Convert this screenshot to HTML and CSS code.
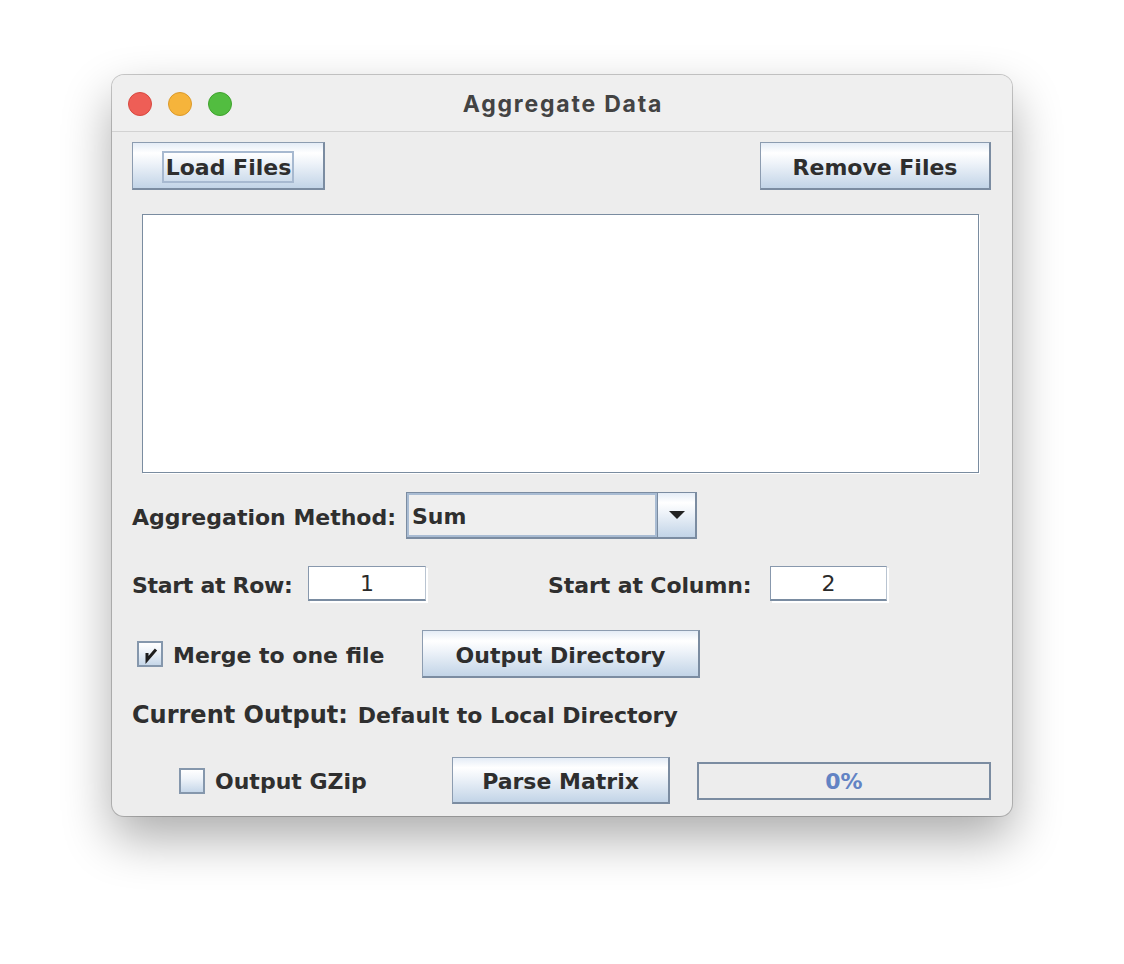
FILE: index.html
```html
<!DOCTYPE html>
<html>
<head>
<meta charset="utf-8">
<link rel="stylesheet" href="styles.css">
</head>
<body>
<div class="stage">
  <div class="window">
    <div class="titlebar">
      <div class="lights">
        <span class="light red"></span>
        <span class="light yellow"></span>
        <span class="light green"></span>
      </div>
      <div class="title">Aggregate Data</div>
      <div></div>
    </div>
    <div class="content">
      <div class="row top-row">
        <div class="btn btn-load"><span class="focus">Load Files</span></div>
        <div class="btn btn-remove"><span class="btn-text">Remove Files</span></div>
      </div>
      <div class="list"></div>
      <div class="row combo-row">
        <div class="lbl lbl-method">Aggregation Method:</div>
        <div class="combo">
          <div class="combo-field">Sum</div>
          <div class="combo-arrow">
            <svg width="18" height="10" viewBox="0 0 18 10"><polygon points="1,1 17,1 9,9" fill="#222"/></svg>
          </div>
        </div>
      </div>
      <div class="row start-row">
        <div class="lbl lbl-row">Start at Row:</div>
        <div class="field field-row">1</div>
        <div class="lbl lbl-col">Start at Column:</div>
        <div class="field field-col">2</div>
      </div>
      <div class="row merge-row">
        <div class="check-group merge-group">
          <span class="checkbox">
            <svg width="22" height="22" viewBox="0 0 22 22"><path d="M8 10 L8 17 L17 6.5" fill="none" stroke="#1e1e1e" stroke-width="3" stroke-linejoin="miter" stroke-linecap="butt"/></svg>
          </span>
          <span class="check-label">Merge to one file</span>
        </div>
        <div class="btn btn-outdir"><span class="btn-text">Output Directory</span></div>
      </div>
      <div class="row output-row">
        <span class="out-title">Current Output:</span>
        <span class="out-value">Default to Local Directory</span>
      </div>
      <div class="row bottom-row">
        <div class="check-group gzip-group">
          <span class="checkbox"></span>
          <span class="check-label">Output GZip</span>
        </div>
        <div class="btn btn-parse"><span class="btn-text">Parse Matrix</span></div>
        <div class="progress">0%</div>
      </div>
    </div>
  </div>
</div>
</body>
</html>
```
FILE: styles.css
```css
html, body {
  margin: 0;
  padding: 0;
  background: #ffffff;
}
.stage {
  width: 1124px;
  height: 964px;
  box-sizing: border-box;
  padding: 75px 0 0 112px;
}
.window {
  width: 900px;
  height: 741px;
  border-radius: 12px;
  background: #ededed;
  box-shadow: 0 0 0 1px rgba(0,0,0,0.2), 0 22px 50px rgba(0,0,0,0.33);
  overflow: hidden;
  font-family: "DejaVu Sans", sans-serif;
  font-weight: bold;
  color: #2f2f2f;
}
.titlebar {
  height: 57px;
  box-sizing: border-box;
  border-bottom: 1px solid #d2d2d2;
  background: #efefef;
  display: grid;
  grid-template-columns: 1fr auto 1fr;
  align-items: center;
}
.lights {
  display: flex;
  gap: 16px;
  padding-left: 16px;
  padding-top: 1px;
}
.light {
  width: 24px;
  height: 24px;
  border-radius: 50%;
  box-sizing: border-box;
}
.red { background: #ee5e56; border: 1px solid #d8483f; }
.yellow { background: #f6b43b; border: 1px solid #dc9a2a; }
.green { background: #52bd40; border: 1px solid #3fa32d; }
.title {
  font-family: "Inter", sans-serif;
  font-weight: 700;
  font-size: 23px;
  letter-spacing: 1.8px;
  color: #434343;
  padding-top: 1px;
  padding-left: 2px;
}
.content {
  padding: 0 21px 0 20px;
}
.row {
  display: flex;
  align-items: center;
}
.btn {
  box-sizing: border-box;
  height: 48px;
  border: 1px solid #8c9cb0;
  border-right: 2px solid #7b8ca1;
  border-bottom: 2px solid #7b8ca1;
  background: linear-gradient(#e4ecf6 0%, #ffffff 22%, #eef3f9 45%, #c2d4e7 100%);
  display: flex;
  align-items: center;
  justify-content: center;
  font-size: 22px;
  color: #2e2e2e;
}
.btn-text {
  padding-top: 3px;
}
.top-row {
  margin-top: 10px;
  justify-content: space-between;
}
.btn-load { width: 193px; }
.focus {
  border: 2px solid #a7b9d0;
  padding: 2px 1px 0 2px;
  line-height: 26px;
  margin-top: 2px;
}
.btn-remove { width: 231px; }
.list {
  margin: 24px 0 0 10px;
  width: 837px;
  height: 259px;
  box-sizing: border-box;
  border: 1px solid #7a8ca0;
  background: #ffffff;
  box-shadow: 1px 1px 0 #ffffff;
}
.combo-row {
  margin-top: 19px;
  height: 47px;
}
.lbl {
  font-size: 22px;
  padding-top: 3px;
}
.lbl-method { width: 274px; }
.combo {
  width: 291px;
  height: 47px;
  box-sizing: border-box;
  border: 1px solid #7b8ca1;
  border-right: 2px solid #7b8ca1;
  border-bottom: 2px solid #7b8ca1;
  display: flex;
}
.combo-field {
  flex: 1;
  box-sizing: border-box;
  border: 2px solid #a9bcd3;
  background: #efefef;
  padding-left: 3px;
  padding-top: 2px;
  font-size: 22px;
  display: flex;
  align-items: center;
}
.combo-arrow {
  width: 38px;
  box-sizing: border-box;
  border-left: 1px solid #7b8ca1;
  background: linear-gradient(#e4ecf6 0%, #ffffff 22%, #eef3f9 45%, #c2d4e7 100%);
  display: flex;
  align-items: center;
  justify-content: center;
}
.start-row {
  margin-top: 27px;
  height: 35px;
}
.lbl-row { width: 176px; letter-spacing: -0.3px; }
.lbl-col { width: 222px; margin-left: 122px; letter-spacing: -0.1px; }
.field {
  box-sizing: border-box;
  height: 35px;
  background: #ffffff;
  border-top: 1px solid #8898ad;
  border-left: 1px solid #8898ad;
  border-right: 1px solid #b9c4d1;
  border-bottom: 2px solid #7a8ca1;
  box-shadow: 2px 2px 0 #ffffff;
  font-family: "DejaVu Sans", sans-serif;
  font-weight: normal;
  font-size: 22px;
  color: #2a2a2a;
  text-align: center;
  line-height: 34px;
}
.field-row { width: 118px; }
.field-col { width: 117px; }
.merge-row {
  margin-top: 29px;
  height: 48px;
}
.check-group {
  display: flex;
  align-items: center;
}
.merge-group {
  width: 285px;
  padding-left: 5px;
}
.checkbox {
  width: 26px;
  height: 26px;
  box-sizing: border-box;
  border: 2px solid #8597ac;
  background: linear-gradient(#ffffff 0%, #eef3f9 40%, #c6d7e9 100%);
  display: flex;
  align-items: center;
  justify-content: center;
}
.check-label {
  font-size: 22px;
  margin-left: 10px;
  padding-top: 2px;
}
.btn-outdir { width: 278px; }
.output-row {
  margin-top: 22px;
  height: 30px;
}
.out-title {
  font-size: 24px;
}
.out-value {
  font-size: 22px;
  margin-left: 10px;
}
.bottom-row {
  margin-top: 27px;
  height: 47px;
}
.gzip-group {
  width: 273px;
  padding-left: 47px;
}
.btn-parse {
  width: 218px;
  height: 47px;
}
.progress {
  margin-left: 27px;
  width: 294px;
  height: 38px;
  box-sizing: border-box;
  border: 2px solid #7b8ca1;
  background: #ededed;
  color: #6283c4;
  font-size: 22px;
  padding-top: 2px;
  display: flex;
  align-items: center;
  justify-content: center;
}
```
